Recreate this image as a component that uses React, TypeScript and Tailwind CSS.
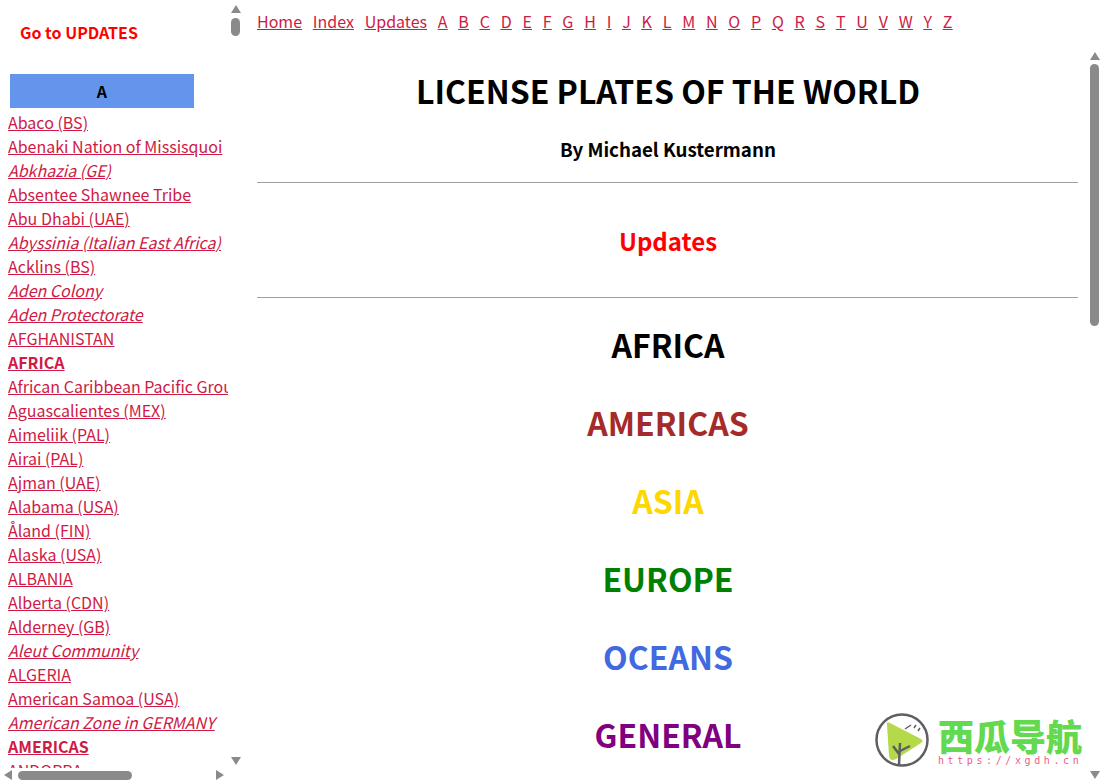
const font = { fontFamily: '"Noto Sans CJK SC", "Noto Sans", sans-serif' }

type Entry = { label: string; kind?: 'i' | 'b' }

const entries: Entry[] = [
  { label: 'Abaco (BS)' },
  { label: 'Abenaki Nation of Missisquoi' },
  { label: 'Abkhazia (GE)', kind: 'i' },
  { label: 'Absentee Shawnee Tribe' },
  { label: 'Abu Dhabi (UAE)' },
  { label: 'Abyssinia (Italian East Africa)', kind: 'i' },
  { label: 'Acklins (BS)' },
  { label: 'Aden Colony', kind: 'i' },
  { label: 'Aden Protectorate', kind: 'i' },
  { label: 'AFGHANISTAN' },
  { label: 'AFRICA', kind: 'b' },
  { label: 'African Caribbean Pacific Group' },
  { label: 'Aguascalientes (MEX)' },
  { label: 'Aimeliik (PAL)' },
  { label: 'Airai (PAL)' },
  { label: 'Ajman (UAE)' },
  { label: 'Alabama (USA)' },
  { label: 'Åland (FIN)' },
  { label: 'Alaska (USA)' },
  { label: 'ALBANIA' },
  { label: 'Alberta (CDN)' },
  { label: 'Alderney (GB)' },
  { label: 'Aleut Community', kind: 'i' },
  { label: 'ALGERIA' },
  { label: 'American Samoa (USA)' },
  { label: 'American Zone in GERMANY', kind: 'i' },
  { label: 'AMERICAS', kind: 'b' },
  { label: 'ANDORRA' },
]

const navLinks = ['Home', 'Index', 'Updates']
const letters = 'A B C D E F G H I J K L M N O P Q R S T U V W Y Z'.split(' ')

const regions = [
  { name: 'AFRICA', color: 'text-black' },
  { name: 'AMERICAS', color: 'text-[#a52a2a]' },
  { name: 'ASIA', color: 'text-[#ffd700]' },
  { name: 'EUROPE', color: 'text-[#008000]' },
  { name: 'OCEANS', color: 'text-[#4169e1]' },
  { name: 'GENERAL', color: 'text-[#800080]' },
]

const Arrow = ({ dir, className }: { dir: 'up' | 'down' | 'left' | 'right'; className: string }) => {
  const points = {
    up: '5,1 10,9 0,9',
    down: '0,1 10,1 5,9',
    left: '9,0 9,10 1,5',
    right: '1,0 1,10 9,5',
  }
  return (
    <svg viewBox="0 0 10 10" className={`absolute h-[10px] w-[10px] ${className}`}>
      <polygon points={points[dir]} fill="#8a8a8a" />
    </svg>
  )
}

const Sidebar = () => {
  return (
    <aside className="relative h-[783px] w-[257px] shrink-0 overflow-hidden">
      <div className="pl-5 pt-5 text-[16px] leading-6 font-bold text-[#ff0000]">Go to UPDATES</div>
      <div className="mt-[30px] ml-[10px] flex h-[34px] w-[184px] items-center justify-center bg-[#6495ed] text-[16px] font-bold text-black">A</div>
      <ul className="mt-[2px] h-[658px] w-[228px] overflow-hidden pl-2 whitespace-nowrap">
        {entries.map((e) => (
          <li key={e.label} className="h-6 text-[16px] leading-6">
            <a href="#" className={`text-[#ce1a44] underline ${e.kind === 'i' ? 'italic' : ''} ${e.kind === 'b' ? 'font-bold' : ''}`}>{e.label}</a>
          </li>
        ))}
      </ul>
      <Arrow dir="up" className="left-[231px] top-[4px]" />
      <div className="absolute left-[231px] top-[18px] h-[18px] w-[9px] rounded-full bg-[#8a8a8a]" />
      <Arrow dir="down" className="left-[231px] top-[756px]" />
      <Arrow dir="left" className="left-[3px] top-[770px]" />
      <div className="absolute left-[18px] top-[771px] h-[9px] w-[114px] rounded-full bg-[#8a8a8a]" />
      <Arrow dir="right" className="left-[215px] top-[770px]" />
    </aside>
  )
}

const Logo = () => {
  return (
    <div className="absolute left-[875px] top-[713px] flex items-start gap-[9px]">
      <svg viewBox="0 0 54 54" className="h-[54px] w-[54px]">
        <circle cx="27" cy="27" r="25.5" fill="#fff" stroke="#5f5f5f" strokeWidth="2.5" />
        <path d="M12 12 Q11 8 15 10 L46 26 Q49 28 46 30 L21 46 Q15 49 14 43 Z" fill="#b4da4a" />
        <path d="M24 52 L25 30 M24 41 L18 33 M25 38 L35 33" stroke="#5f5f5f" strokeWidth="2.5" fill="none" />
        <path d="M30 16 L36 12 M39 15 L41 12 M43 18 L45 15" stroke="#5f5f5f" strokeWidth="1.5" fill="none" />
      </svg>
      <div className="flex w-[146px] flex-col items-start pt-[2px]">
        <div className="h-[40px] text-[36px] leading-[40px] font-black whitespace-nowrap text-[#62d94f]">西瓜导航</div>
        <div className="text-[10px] leading-3 tracking-[3.6px] whitespace-nowrap text-[#ee5c8a]" style={{ fontFamily: '"DejaVu Sans Mono", monospace' }}>https://xgdh.cn</div>
      </div>
    </div>
  )
}

const Main = () => {
  return (
    <main className="relative flex h-[783px] min-w-0 flex-1 flex-col overflow-hidden">
      <nav className="flex h-[41px] items-center gap-[10.8px] text-[16px] text-[#ce1a44] underline">
        {navLinks.map((l) => (
          <a key={l} href="#">{l}</a>
        ))}
        {letters.map((l) => (
          <a key={l} href="#">{l}</a>
        ))}
      </nav>
      <div className="w-[822px] text-center">
        <h1 className="mt-[25px] text-[32px] leading-12 font-bold text-black">LICENSE PLATES OF THE WORLD</h1>
        <h2 className="mt-[19px] text-[18.72px] leading-8 font-bold text-black">By Michael Kustermann</h2>
        <hr className="mt-[17px] mr-px border-[#a0a0a0]" />
        <div className="mt-[38px] text-[24px] leading-[40px] font-bold text-[#ff0000]">Updates</div>
        <hr className="mt-[36px] mr-px border-[#a0a0a0]" />
        <div className="mt-[7px] flex flex-col">
          {regions.map((r) => (
            <div key={r.name} className={`h-[78px] text-[32px] leading-[78px] font-bold ${r.color}`}>{r.name}</div>
          ))}
        </div>
      </div>
      <Arrow dir="up" className="left-[833px] top-[51px]" />
      <div className="absolute left-[833px] top-[64px] h-[262px] w-[9px] rounded-full bg-[#8a8a8a]" />
    </main>
  )
}

export default function App() {
  return (
    <div className="relative flex h-[783px] w-[1102px] overflow-hidden bg-white" style={font}>
      <Sidebar />
      <Main />
      <Logo />
      <Arrow dir="down" className="left-[1090px] top-[770px]" />
    </div>
  )
}
